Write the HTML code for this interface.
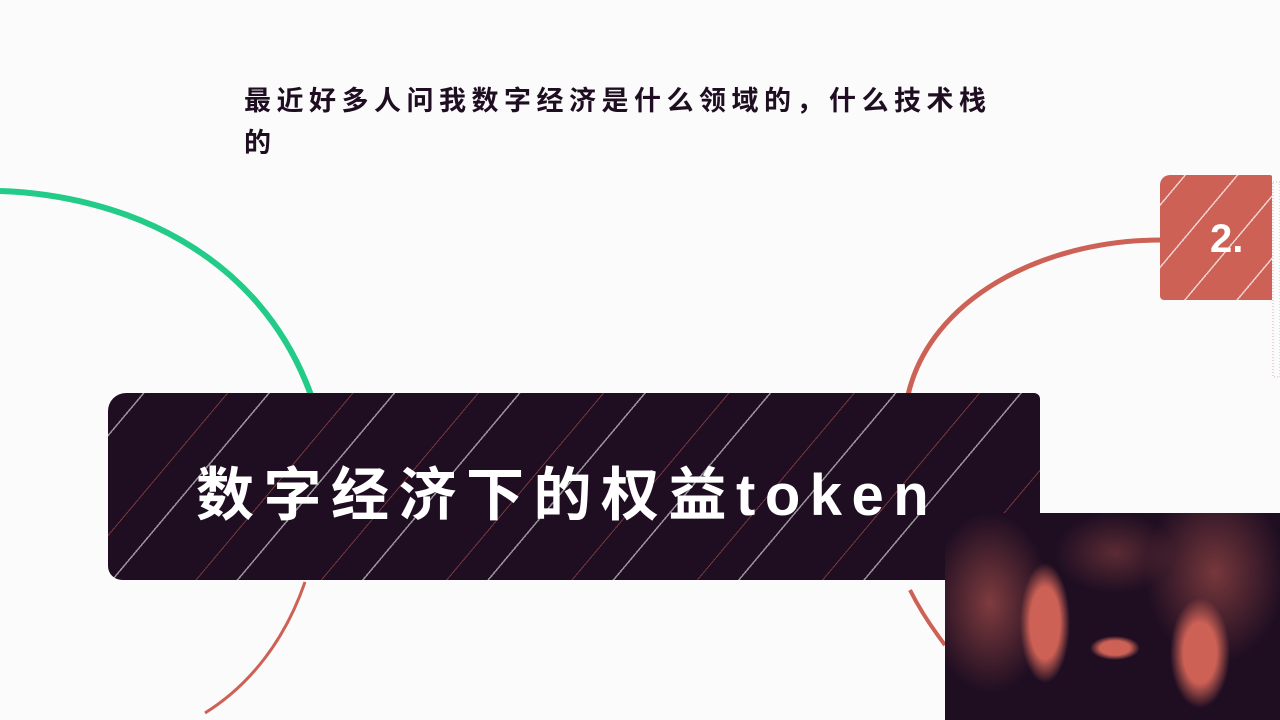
<!DOCTYPE html>
<html><head><meta charset="utf-8"><style>
html,body{margin:0;padding:0;width:1280px;height:720px;overflow:hidden;background:#fbfbfb;position:relative;font-family:"Liberation Sans","Noto Sans CJK SC",sans-serif}
.q{position:absolute;left:244px;top:80px;width:760px;font-size:27px;letter-spacing:5.5px;line-height:42px;color:#1f0e22;font-weight:bold}
.box{position:absolute;left:108px;top:393px;width:932px;height:187px;background:#1f0e22;border-radius:18px 6px 6px 14px;
background-image:repeating-linear-gradient(-50deg,transparent 0 38px,rgba(255,255,255,.55) 38px 39.5px,transparent 39.5px 70px,rgba(205,97,85,.5) 70px 71px,transparent 71px 96px)}
.t{position:absolute;left:196px;top:448px;font-size:58px;font-weight:bold;color:#fff;letter-spacing:9.5px;white-space:nowrap}
.r{position:absolute;left:1160px;top:175px;width:112px;height:125px;background:#cd6155;border-radius:10px 2px 0 4px;
background-image:repeating-linear-gradient(-50deg,transparent 0 26px,rgba(255,255,255,.7) 26px 27.5px,transparent 27.5px 40px)}
.r span{position:absolute;left:50px;top:42px;font-size:40px;font-weight:bold;color:#fff}
.cam{position:absolute;left:945px;top:513px;width:335px;height:207px;background:#1f0e22;
background-image:radial-gradient(ellipse 25px 60px at 100px 110px,#cd6155 60%,transparent 100%),
radial-gradient(ellipse 30px 55px at 255px 140px,#cd6155 55%,transparent 100%),
radial-gradient(ellipse 60px 90px at 45px 90px,rgba(205,97,85,.55),transparent 100%),
radial-gradient(ellipse 70px 90px at 270px 60px,rgba(205,97,85,.5),transparent 100%),
radial-gradient(ellipse 60px 40px at 170px 40px,rgba(205,97,85,.35),transparent 100%),
radial-gradient(ellipse 25px 12px at 170px 135px,#cd6155 60%,transparent 100%)}
</style></head><body>
<svg width="1280" height="720" style="position:absolute;left:0;top:0">
<path d="M0,191 C120,195 260,250 312,398" fill="none" stroke="#22cc88" stroke-width="6"/>
<path d="M305,582 C285,640 250,685 205,713" fill="none" stroke="#cd6155" stroke-width="3"/>
<path d="M1162,240 C1040,240 930,300 908,395" fill="none" stroke="#cd6155" stroke-width="5"/>
<path d="M910,590 C920,610 932,628 945,645" fill="none" stroke="#cd6155" stroke-width="4"/>
<rect x="1273" y="182" width="7" height="195" fill="none" stroke="#e7a79f" stroke-width="1" stroke-dasharray="1 2"/>
</svg>
<div class="q">最近好多人问我数字经济是什么领域的，什么技术栈<br>的</div>
<div class="box"></div>
<div class="t">数字经济下的权益token</div>
<div class="r"><span>2.</span></div>
<div class="cam"></div>
</body></html>
